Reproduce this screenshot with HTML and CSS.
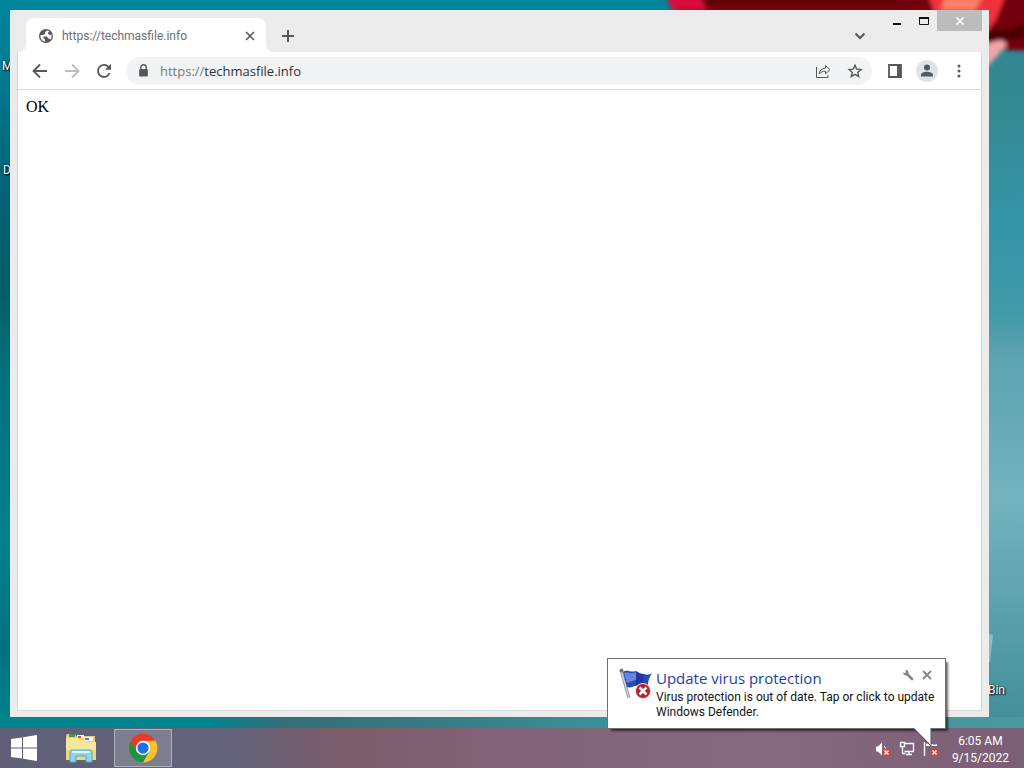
FILE: index.html
```html
<!DOCTYPE html>
<html lang="en">
<head>
  <meta charset="UTF-8">
  <title>techmasfile.info</title>
  <link rel="stylesheet" href="styles.css">
</head>
<body>
  <svg class="wallpaper" viewBox="0 0 1024 768" preserveAspectRatio="none" aria-hidden="true">
    <defs>
      <linearGradient id="seaLeft" x1="0" y1="0" x2="0" y2="1">
        <stop offset="0" stop-color="#00869b"/>
        <stop offset=".1" stop-color="#007a91"/>
        <stop offset=".25" stop-color="#006275"/>
        <stop offset=".38" stop-color="#005d69"/>
        <stop offset=".48" stop-color="#00707c"/>
        <stop offset=".7" stop-color="#00818c"/>
        <stop offset=".85" stop-color="#00727f"/>
        <stop offset=".95" stop-color="#00858f"/>
      </linearGradient>
      <linearGradient id="seaRight" x1="0" y1="0" x2="0" y2="1">
        <stop offset="0" stop-color="#318590"/>
        <stop offset=".15" stop-color="#348993"/>
        <stop offset=".28" stop-color="#3494a8"/>
        <stop offset=".41" stop-color="#429aa8"/>
        <stop offset=".46" stop-color="#5ba2b0"/>
        <stop offset=".65" stop-color="#73b3c0"/>
        <stop offset=".8" stop-color="#5aa0ac"/>
        <stop offset=".95" stop-color="#408e98"/>
      </linearGradient>
      <linearGradient id="seaBottom">
        <stop offset="0" stop-color="#00858f"/>
        <stop offset=".2" stop-color="#008590"/>
        <stop offset=".28" stop-color="#356f79"/>
        <stop offset=".42" stop-color="#367b82"/>
        <stop offset=".6" stop-color="#3b929a"/>
        <stop offset="1" stop-color="#4c979e"/>
      </linearGradient>
      <filter id="soft" x="-20%" y="-20%" width="140%" height="140%"><feGaussianBlur stdDeviation="2"/></filter>
    </defs>
    <rect width="1024" height="768" fill="url(#seaLeft)"/>
    <rect x="940" width="84" height="768" fill="url(#seaRight)"/>
    <rect y="717" width="1024" height="12" fill="url(#seaBottom)"/>
    <g filter="url(#soft)">
      <path d="M668-8H1034V50Q1010 52 980 46L780 22H680Z" fill="#720008"/>
      <path d="M665-8h34l8 18h-36z" fill="#d80a3a"/>
      <path d="M705-4h190v6H705z" fill="#4c0004"/>
      <path d="M928-6h78l-10 26-14 18-48-24z" fill="#f0303e"/>
      <path d="M945-4h38l-8 14h-34z" fill="#ff8068"/>
      <path d="M988 30q20 2 36-6v12q-20 8-36 4z" fill="#4a0004"/>
      <path d="M986 44l14-4q8 2 6 6l-20 22z" fill="#f3a5a7"/>
    </g>
  </svg>

  <main class="desktop">
    <span class="shortcut shortcut-first">M</span>
    <span class="shortcut shortcut-second">D</span>
    <span class="shortcut shortcut-bin">Bin</span>
    <svg class="bin" viewBox="0 0 6 30" aria-hidden="true"><path d="M0 0L4 1 1 28H0z" fill="#dcebf2" opacity=".4"/></svg>

    <section class="window">
      <header class="titlebar">
        <div class="tab">
          <svg class="globe" viewBox="0 0 16 16"><circle cx="8" cy="8" r="7" fill="#55585c"/><path d="M9 2.500L7 4.300 7.200 6 4.800 7H2.600C2 10.500 4 13 7 13.600V11.500L5.500 10V8.600H9l1.200 1.900h1.300l.8 1.300c1.300-1.500 1.700-3.300 1.100-5.200L11.500 7 10 5.800l.3-1.600 1-.8C10.600 2.900 9.800 2.600 9 2.500z" fill="#fff"/></svg>
          <span class="tab-title">https://techmasfile.info</span>
          <button class="tab-close" aria-label="Close tab"><svg viewBox="0 0 10 10"><path d="M1 1l8 8M9 1l-8 8"/></svg></button>
        </div>
        <button class="new-tab" aria-label="New tab"><svg viewBox="0 0 14 14"><path d="M7 1v12M1 7h12"/></svg></button>
        <button class="tab-search" aria-label="Search tabs"><svg viewBox="0 0 12 8"><path d="M1.500 1.500L6 6l4.500-4.500"/></svg></button>
        <div class="controls">
          <button class="control" aria-label="Minimize"><svg viewBox="0 0 12 10"><path d="M2 8h8" stroke-width="2"/></svg></button>
          <button class="control" aria-label="Maximize"><svg viewBox="0 0 12 10"><path d="M1.500 1.500h9v7h-9z"/><path d="M1 2h10" stroke-width="2"/></svg></button>
          <button class="control control-close" aria-label="Close"><svg viewBox="0 0 12 10"><path d="M2.500 1.500l7 7M9.500 1.500l-7 7" stroke-width="1.700"/></svg></button>
        </div>
      </header>

      <div class="view">
        <nav class="toolbar">
          <button class="tool" aria-label="Back"><svg viewBox="0 0 16 16"><path d="M15 8H2M8 1.500L1.500 8 8 14.500"/></svg></button>
          <button class="tool tool-off" aria-label="Forward"><svg viewBox="0 0 16 16"><path d="M1 8h13M8 1.500L14.500 8 8 14.500"/></svg></button>
          <button class="tool" aria-label="Reload"><svg viewBox="0 0 16 16"><path d="M13.600 10A6 6 0 1 1 12.500 4"/><path d="M15 .8v6H9z" class="solid"/></svg></button>
          <div class="omnibox">
            <svg class="lock" viewBox="0 0 10 12"><path d="M2.500 5V3.200a2.500 2.500 0 0 1 5 0V5" fill="none" stroke="#55585c" stroke-width="1.300"/><rect x="1" y="4.500" width="8" height="7" rx="1" fill="#55585c"/></svg>
            <label class="scheme" for="address">https://</label>
            <input class="address" id="address" type="text" value="techmasfile.info">
            <button class="tool" aria-label="Share"><svg viewBox="0 0 16 16" class="thin"><path d="M1.500 4v10.500h11.500V12"/><path d="M4.200 11C4.500 7.500 7 5.200 10.500 5.200V2.500L15 6.700l-4.500 4.100V8.200C7.800 8.200 5.800 9 4.200 11z"/></svg></button>
            <button class="tool" aria-label="Bookmark this page"><svg viewBox="0 0 16 16" class="star"><path d="M8 2.300l1.700 3.900 4.200.4-3.200 2.800 1 4.200L8 11.400l-3.700 2.200 1-4.200-3.200-2.800 4.200-.4z"/></svg></button>
          </div>
          <button class="tool" aria-label="Side panel"><svg viewBox="0 0 16 16"><path d="M2 2h12v12H2z"/><path d="M10 2h4v12h-4z" class="solid"/></svg></button>
          <button class="tool" aria-label="Profile"><svg class="profile" viewBox="0 0 22 22"><circle cx="11" cy="11" r="11"/><path d="M11 10.500a3 3 0 1 0 0-6 3 3 0 0 0 0 6zM5 16.500V15c0-2 3.500-3.200 6-3.200s6 1.200 6 3.200v1.500z" class="solid"/></svg></button>
          <button class="tool" aria-label="Menu"><svg viewBox="0 0 16 16"><g class="solid"><circle cx="8" cy="3" r="1.500"/><circle cx="8" cy="8" r="1.500"/><circle cx="8" cy="13" r="1.500"/></g></svg></button>
        </nav>
        <article class="page">OK</article>
      </div>
    </section>
  </main>

  <footer class="taskbar">
    <button class="task" aria-label="Start"><svg class="start" viewBox="0 0 26 26"><path d="M0 4l11-1.500v10H0zM12 2.300L26 0v12.500H12zM0 13.500h11v10L0 22zM12 13.500h14V26l-14-2.200z" fill="#fff"/></svg></button>
    <button class="task" aria-label="File Explorer">
      <svg class="explorer" viewBox="0 0 32 30">
        <path d="M1 3l1-2h8l1 2h19v24H1z" fill="#e8cf75"/>
        <path d="M4 1h6v3H4z" fill="#3e9a4a"/><path d="M12 2h7v3h-7z" fill="#fff"/><path d="M13 3h3v2h-3z" fill="#cc5a35"/>
        <path d="M19 4h9v4h-9z" fill="#f6fbff"/><path d="M20 5h4v2h-4z" fill="#4388c4"/>
        <path d="M1 5h12l2 2h5l2 2h9v18H1z" fill="#f8e69b"/>
        <path d="M1 17h30v10H1z" fill="#efd677"/>
        <path d="M5 29V19q0-2 2-2h18q2 0 2 2v10h-6v-6H11v6z" fill="#8fd4ea" stroke="#51a9cb"/>
        <path d="M7 19h18" stroke="#dff7ff" stroke-width="2"/>
      </svg>
    </button>
    <button class="task task-active" aria-label="Google Chrome">
      <svg class="chrome" viewBox="0 0 48 48">
        <circle cx="24" cy="24" r="23" fill="#fbc02d"/>
        <path d="M24 24L4.080 12.500A23 23 0 0 0 24 47L34 29.750z" fill="#229342"/>
        <path d="M4.080 12.500A23 23 0 0 1 43.920 12.500H24v11.500L14 29.750z" fill="#e33b2e"/>
        <circle cx="24" cy="24" r="11.500" fill="#fff"/><circle cx="24" cy="24" r="9" fill="#1a73e8"/>
      </svg>
    </button>
    <div class="tray">
      <button class="tray-icon" aria-label="Volume muted"><svg viewBox="0 0 16 16"><path d="M1 5.500h2L7 1.500v13l-4-4H1z" fill="#fff"/><path d="M9 5q1.500 1 1.500 3" fill="none" stroke="#fff"/><circle cx="11.500" cy="11.500" r="4" fill="#d9452f"/><path d="M9.500 9.500l4 4M13.500 9.500l-4 4" stroke="#fff" stroke-width="1.400"/></svg></button>
      <button class="tray-icon" aria-label="Network"><svg viewBox="0 0 16 16"><path d="M5.500 2.500h9v8h-9M10 11v2.500M7 13.500h6M1.500 1.500h4v4h-4zM3.500 6v6.500h3" fill="none" stroke="#fff" stroke-width="1.300"/></svg></button>
      <button class="tray-icon" aria-label="Action Center"><svg viewBox="0 0 16 16"><path d="M1.500 1v14" stroke="#fff" stroke-width="1.400"/><path d="M3 3q3-1.500 6 0t5 0v2H3z" fill="#fff"/><circle cx="11.500" cy="11.500" r="4" fill="#d9452f"/><path d="M9.500 9.500l4 4M13.500 9.500l-4 4" stroke="#fff" stroke-width="1.400"/></svg></button>
    </div>
    <div class="clock"><span>6:05 AM</span><span>9/15/2022</span></div>
  </footer>

  <aside class="balloon">
    <svg class="flag" viewBox="0 0 34 34">
      <path d="M2 2l8 28" stroke="#8f98a3" stroke-width="3"/><path d="M2 2l8 28" stroke="#e1e5ea"/>
      <circle cx="2.500" cy="2.500" r="2" fill="#6f7780"/>
      <path d="M4 4c5-3 7 1 13-1 3 2 5 3 8 3 3 1 5 1 8-1-3 5-4 8-4 12-6 3-8-1-13 1-3 1-5 2-8 1z" fill="#2d49b8"/>
      <path d="M5 5c5-2 7 2 12-1l2 8c-5 0-7 2-11 3z" fill="#6585e0"/>
      <path d="M17 3.500c3 2 5 3 8 3l-1 12c-3-2-5-1-7-1z" fill="#2039a0"/>
      <circle cx="24" cy="23" r="8" fill="#e6d5d7"/><circle cx="24" cy="23" r="7" fill="#b3202e"/>
      <path d="M20.500 19.500l7 7M27.500 19.500l-7 7" stroke="#fff" stroke-width="2.600"/>
    </svg>
    <div class="message">
      <h1 class="message-title">Update virus protection</h1>
      <p class="message-text">Virus protection is out of date. Tap or click to update Windows Defender.</p>
    </div>
    <div class="balloon-buttons">
      <button aria-label="Options"><svg viewBox="0 0 12 12"><path d="M5 5l5 5" stroke="#858585" stroke-width="2.500" stroke-linecap="round"/><path d="M1 3.500l2 .5.800-.8L3.500 1Q6 .5 6.500 3T4.500 6.500Q1.500 7 1 3.500z" fill="#858585"/></svg></button>
      <button aria-label="Dismiss"><svg viewBox="0 0 12 12"><path d="M2 2l8 8M10 2l-8 8" stroke="#858585" stroke-width="1.800"/></svg></button>
    </div>
    <svg class="tail" viewBox="0 0 26 22" aria-hidden="true"><path d="M0 0l18 18V0z" fill="#fff"/><path d="M0 1l18 18V1" fill="none" stroke="#555"/></svg>
  </aside>
</body>
</html>
```
FILE: styles.css
```css
* {
  box-sizing: border-box;
}

body {
  margin: 0;
  height: 100vh;
  display: flex;
  flex-direction: column;
  position: relative;
  overflow: hidden;
  font-family: Roboto, "Open Sans", sans-serif;
  font-size: 12px;
  background: #00809a;
}

button {
  display: flex;
  align-items: center;
  justify-content: center;
  padding: 0;
  border: none;
  background: none;
}

.wallpaper {
  position: absolute;
  inset: 0;
  width: 100%;
  height: 100%;
}

/* Desktop */
.desktop {
  position: relative;
  flex: 1;
  display: flex;
  padding: 10px 35px 11px 10px;
}

.shortcut {
  position: absolute;
  color: #fff;
  line-height: 16px;
  text-shadow: 1px 1px 2px #000, 0 0 2px #000;
}

.shortcut-first {
  left: 2px;
  top: 58px;
}

.shortcut-second {
  left: 3px;
  top: 162px;
}

.shortcut-bin {
  right: 19px;
  bottom: 30px;
}

.bin {
  position: absolute;
  right: 29px;
  bottom: 64px;
  width: 6px;
  height: 30px;
}

/* Browser window */
.window {
  position: relative;
  flex: 1;
  display: flex;
  flex-direction: column;
  padding: 0 7px 6px;
  background: #ebebeb;
}

.titlebar {
  display: flex;
  align-items: flex-end;
  height: 42px;
}

.titlebar svg {
  fill: none;
  stroke: #55585c;
  stroke-width: 2;
}

.tab {
  position: relative;
  display: flex;
  align-items: center;
  gap: 8px;
  width: 240px;
  height: 34px;
  margin-left: 9px;
  padding: 2px 10px 0 12px;
  background: #fff;
  border-radius: 8px 8px 0 0;
}

.tab::before,
.tab::after {
  content: "";
  position: absolute;
  bottom: 0;
  width: 8px;
  height: 8px;
}

.tab::before {
  left: -8px;
  background: radial-gradient(circle at 0 0, transparent 8px, #fff 8px);
}

.tab::after {
  right: -8px;
  background: radial-gradient(circle at 100% 0, transparent 8px, #fff 8px);
}

.titlebar .globe {
  width: 16px;
  height: 16px;
  stroke: none;
}

.tab-title {
  flex: 1;
  color: #6b6e72;
}

.tab-close {
  width: 12px;
  height: 12px;
}

.tab-close svg {
  width: 10px;
  height: 10px;
  stroke-width: 1.600;
}

.new-tab,
.tab-search {
  width: 28px;
  height: 34px;
  padding-top: 2px;
}

.new-tab {
  margin-left: 8px;
}

.new-tab svg {
  width: 14px;
  height: 14px;
}

.tab-search {
  margin-left: auto;
  margin-right: 9px;
}

.tab-search svg {
  width: 12px;
  height: 8px;
}

.controls {
  display: flex;
  align-self: flex-start;
}

.control {
  width: 27px;
  height: 21px;
}

.control svg {
  width: 12px;
  height: 10px;
  stroke: #111;
  stroke-width: 1;
}

.control-close {
  width: 45px;
  background: #bcbcbc;
}

.control-close svg {
  stroke: #fff;
}

.view {
  flex: 1;
  display: flex;
  flex-direction: column;
  background: #fff;
  border: 1px solid #d8d8d8;
  border-top: none;
}

.toolbar {
  display: flex;
  align-items: center;
  gap: 8px;
  height: 38px;
  padding: 0 10px;
  border-bottom: 1px solid #d9dadc;
}

.tool {
  width: 24px;
  height: 24px;
}

.tool svg {
  width: 16px;
  height: 16px;
  fill: none;
  stroke: #55585c;
  stroke-width: 1.800;
}

.tool-off svg {
  stroke: #babcbe;
}

.tool .solid {
  fill: #55585c;
  stroke: none;
}

.tool .thin {
  stroke-width: 1;
}

.tool .star {
  stroke-width: 1.400;
}

.tool .profile {
  width: 22px;
  height: 22px;
  fill: #dfe2e8;
  stroke: none;
}

.omnibox {
  flex: 1;
  display: flex;
  align-items: center;
  height: 28px;
  margin: 0 3px 0 2px;
  padding: 0 5px 0 12px;
  border-radius: 14px;
  background: #f1f3f4;
}

.omnibox .tool {
  margin-left: 8px;
}

.lock {
  width: 11px;
  height: 13px;
  margin-right: 11px;
}

.scheme,
.address {
  font-family: "Open Sans", "Noto Sans", sans-serif;
  font-size: 13px;
  line-height: 20px;
}

.scheme {
  color: #77797d;
}

.address {
  flex: 1;
  min-width: 0;
  padding: 0;
  border: none;
  outline: none;
  background: none;
  color: #303134;
}

.page {
  flex: 1;
  padding: 8px;
  color: #000;
  font-family: "Liberation Serif", serif;
  font-size: 16px;
  line-height: 18px;
}

/* Taskbar */
.taskbar {
  position: relative;
  display: flex;
  align-items: center;
  height: 40px;
  padding: 0 15px 0 0;
  background: linear-gradient(90deg, #5f6078 0, #636279 23%, #7b5c69 33%, #83647a 50%, #84697f 75%, #7a5f75 100%);
}

.task {
  width: 58px;
  height: 38px;
  margin-right: 8px;
}

.task:first-child {
  width: 48px;
  margin-right: 4px;
}

.task:nth-child(2) {
  margin-right: 4px;
}

.task-active {
  border: 1px solid #b0b1bd;
  background: #7d7e90;
}

.start {
  width: 26px;
  height: 26px;
}

.explorer {
  width: 32px;
  height: 30px;
}

.chrome {
  width: 30px;
  height: 30px;
}

.tray {
  display: flex;
  gap: 8px;
  margin-left: auto;
  margin-right: 13px;
  padding-top: 2px;
}

.tray-icon,
.tray-icon svg {
  width: 16px;
  height: 16px;
}

.clock {
  display: flex;
  flex-direction: column;
  align-items: center;
  padding-top: 4px;
  color: #fff;
  line-height: 17px;
}

/* Notification balloon over the taskbar */
.balloon {
  position: absolute;
  right: 78px;
  bottom: 39px;
  display: flex;
  width: 339px;
  height: 71px;
  padding: 9px 4px 9px 11px;
  background: #fff;
  border: 1px solid #707070;
  box-shadow: 3px 3px 2px -1px rgba(0, 0, 0, 0.6);
}

.flag {
  flex: none;
  width: 34px;
  height: 34px;
  margin-right: 3px;
}

.message {
  flex: 1;
}

.message-title {
  margin: 0 0 2px;
  color: #1c3fa5;
  font-family: "Open Sans", "Noto Sans", sans-serif;
  font-size: 15px;
  font-weight: normal;
  line-height: 20px;
}

.message-text {
  margin: 0;
  color: #111;
  line-height: 15px;
}

.balloon-buttons {
  position: absolute;
  top: 10px;
  right: 12px;
  display: flex;
  gap: 7px;
}

.balloon-buttons svg {
  width: 12px;
  height: 12px;
}

.tail {
  position: absolute;
  top: 68px;
  right: 6px;
  width: 26px;
  height: 22px;
}
```
